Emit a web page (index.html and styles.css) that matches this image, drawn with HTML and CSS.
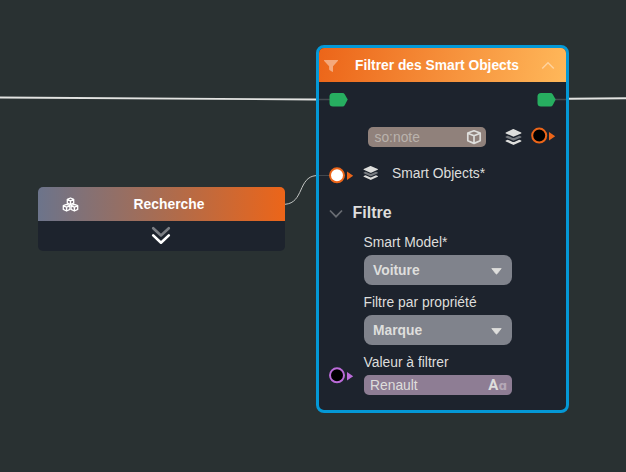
FILE: index.html
```html
<!DOCTYPE html>
<html lang="fr">
<head>
<meta charset="utf-8">
<title>Smart Objects</title>
<link rel="stylesheet" href="styles.css">
</head>
<body>
<svg class="defs" width="0" height="0" aria-hidden="true">
  <symbol id="layers" viewBox="0 0 16 16">
    <path d="M8 0 15.200 3.500a.5.5 0 0 1 0 .9L8.400 7.600a1 1 0 0 1-.8 0L.8 4.400a.5.5 0 0 1 0-.9L7.600.1z" fill="#dededc"/>
    <path d="M.8 7.500 2.600 6.700 7.300 8.900a1.700 1.700 0 0 0 1.400 0L13.400 6.700 15.200 7.500a.5.5 0 0 1 0 .9L8.400 11.600a1 1 0 0 1-.8 0L.8 8.400a.5.5 0 0 1 0-.9z" fill="#777b80"/>
    <path d="M.8 11.500 2.600 10.700 7.300 12.900a1.700 1.700 0 0 0 1.400 0L13.400 10.700 15.200 11.500a.5.5 0 0 1 0 .9L8.400 15.800a1 1 0 0 1-.8 0L.8 12.400a.5.5 0 0 1 0-.9z" fill="#dededc"/>
  </symbol>
  <symbol id="cube" viewBox="0 0 16 16">
    <path d="M8 1.800 14.200 4v7.800L8 14.400 1.800 11.800V4zM1.800 4.300 8 6.800l6.200-2.500M8 6.800v7.500" fill="none" stroke="currentColor" stroke-width="1.700" stroke-linejoin="round"/>
  </symbol>
</svg>

<main class="canvas">
  <section class="node search">
    <header class="bar search-bar">
      <svg class="cubes" viewBox="0 0 17 15" preserveAspectRatio="none" fill="none" stroke="#fff" stroke-width="1.300" stroke-linejoin="round">
        <path d="M8.500 1 11.700 2.400v3.700L8.500 7.700 5.300 6.100V2.400zM5.300 2.600l3.200 1.300 3.200-1.300M8.500 4v3.500"/>
        <path d="M4.600 7.300 7.900 8.700v3.700L4.600 14 1.300 12.400V8.700zM1.300 8.900l3.300 1.300 3.300-1.300M4.600 10.300v3.500"/>
        <path d="M12.400 7.300 15.700 8.700v3.700L12.400 14 9.100 12.400V8.700zM9.100 8.900l3.300 1.300 3.300-1.300M12.400 10.300v3.500"/>
      </svg>
      <h2 class="title">Recherche</h2>
    </header>
    <div class="expand">
      <svg width="20" height="20" viewBox="0 0 20 20" fill="none" stroke-width="2.600" stroke-linecap="round" stroke-linejoin="round">
        <path d="M2.200 2.200 10 9.500l7.800-7.300" stroke="#7b7e84"/>
        <path d="M2.200 9.400 10 16.700l7.800-7.300" stroke="#fff"/>
      </svg>
    </div>
  </section>

  <section class="node filter">
    <header class="bar filter-bar">
      <svg class="funnel" viewBox="0 0 14 12"><path d="M.6 0h12.800a.5.5 0 0 1 .4.900L9 6.200v5.200a.5.5 0 0 1-.8.400L5.400 9.900a.8.800 0 0 1-.3-.6V6.200L.2.900A.5.500 0 0 1 .6 0z" fill="#fff" fill-opacity=".42"/></svg>
      <h2 class="title">Filtrer des Smart Objects</h2>
      <svg class="collapse" viewBox="0 0 14 9"><path d="M1.200 7.500 7 1.700l5.800 5.800" fill="none" stroke="#fff" stroke-opacity=".42" stroke-width="1.500"/></svg>
    </header>
    <div class="body">
      <div class="output">
        <div class="field note"><span>so:note</span><svg class="cube"><use href="#cube"/></svg></div>
        <svg class="layers" viewBox="0 0 16 16" preserveAspectRatio="none"><use href="#layers"/></svg>
      </div>
      <div class="input">
        <svg class="layers" viewBox="0 0 16 16" preserveAspectRatio="none"><use href="#layers"/></svg>
        <span>Smart Objects*</span>
      </div>
      <h3 class="group">
        <svg width="14" height="10" viewBox="0 0 14 10"><path d="M1 1.500 7 7.700l6-6.200" fill="none" stroke="#686c72" stroke-width="1.700"/></svg>
        <span>Filtre</span>
      </h3>
      <div class="form">
        <div class="label">Smart Model*</div>
        <div class="select"><span>Voiture</span><svg class="caret" viewBox="0 0 11 7"><path d="M.8.500h9.400L6.100 5.700a.8.800 0 0 1-1.200 0z" fill="#dededc" stroke="#dededc" stroke-width=".8" stroke-linejoin="round"/></svg></div>
        <div class="label">Filtre par propriété</div>
        <div class="select"><span>Marque</span><svg class="caret" viewBox="0 0 11 7"><path d="M.8.500h9.400L6.100 5.700a.8.800 0 0 1-1.200 0z" fill="#dededc" stroke="#dededc" stroke-width=".8" stroke-linejoin="round"/></svg></div>
        <div class="label">Valeur à filtrer</div>
        <div class="field value"><span>Renault</span><span class="type">A<i>ɑ</i></span></div>
      </div>
    </div>
  </section>

  <svg class="wires" width="626" height="472" viewBox="0 0 626 472" fill="none">
    <path d="M0 97.500 316 99.500M569 98.800 626 98.200" stroke="#e2e3e1" stroke-width="1.900"/>
    <path d="M319 99.500h11M555 99.500h11" stroke="#444a50" stroke-width="1.500"/>
    <path d="M285 204.300C304 203 298 177 316 175.600" stroke="#c4c7c5"/>
    <path d="M319 175.500h11" stroke="#42484e"/>
    <path id="flow" d="M333 93h9.500q1.500 0 2.200 1.200l3 5.300-3 5.800q-.7 1.200-2.200 1.200H333q-3.500 0-3.500-3.500V96.500q0-3.500 3.500-3.500z" fill="#27ae60"/>
    <use href="#flow" x="208"/>
    <g stroke-width="2">
      <circle cx="337" cy="175.300" r="7" fill="#fff" stroke="#ec6519"/>
      <circle cx="539.200" cy="135.600" r="7" fill="#000" stroke="#ec6519"/>
      <circle cx="337" cy="375.300" r="7" fill="#000" stroke="#bb6bd9"/>
    </g>
    <path d="m347 171.500 6.200 4.200-6.200 4.200zM549 132l6.200 4.200-6.200 4.200z" fill="#ec6519"/>
    <path d="m347 372 6.200 4.200-6.200 4.200z" fill="#bb6bd9"/>
  </svg>
</main>
</body>
</html>
```
FILE: styles.css
```css
* { box-sizing: border-box; }

body {
  margin: 0;
  background: #293132;
  color: #dededc;
  font: 13.850px/20px "Liberation Sans", Arial, sans-serif;
}

h2, h3 { margin: 0; }
svg { display: block; flex: none; }
.defs { position: absolute; }

.canvas {
  position: relative;
  width: 626px;
  height: 472px;
  overflow: hidden;
}

.wires {
  position: absolute;
  inset: 0;
  pointer-events: none;
}

.node {
  position: absolute;
  overflow: hidden;
  background: #1d232d;
}

.search {
  left: 38px;
  top: 187px;
  width: 247px;
  height: 64px;
  border-radius: 5px;
}

.filter {
  left: 316px;
  top: 45px;
  width: 253px;
  height: 368px;
  border: 3px solid #0498d6;
  border-radius: 8px;
}

.bar {
  display: grid;
  align-items: center;
  height: 34px;
  color: #fff;
}

.title {
  font-size: 13.850px;
  line-height: 20px;
  text-align: center;
  white-space: nowrap;
}

.search-bar {
  grid-template-columns: 64px 1fr 49px;
  background: linear-gradient(90deg, #6c748b, #b26b49 57%, #ec6519);
}

.cubes { width: 17px; height: 15px; margin: 1px 0 0 24px; }

.expand { display: flex; justify-content: center; padding: 5px 1px 0 0; }

.filter-bar {
  grid-template-columns: 28px 1fr 34px;
  background: linear-gradient(100deg, #ec6519, #ffb85a);
}

.funnel { width: 14px; height: 12px; margin: 1px 0 0 5px; }
.filter-bar .title { padding: 2px 5px 0 0; font-size: 13.800px; }
.collapse { width: 14px; height: 9px; margin-left: 9px; }

.body { padding-top: 45px; }

.output {
  display: flex;
  align-items: center;
  gap: 19px;
  padding-left: 49px;
}
.output .layers { margin-top: -1px; }

.field {
  display: flex;
  align-items: center;
  justify-content: space-between;
  height: 20px;
  padding: 0 6.500px;
  border-radius: 5px;
}

.note { width: 118px; padding-right: 4px; background: #90817b; color: #bab3ad; }
.note span { margin-top: -1px; }
.cube { width: 16px; height: 16px; color: #dededc; }
.layers { width: 17px; height: 16px; }

.input {
  display: flex;
  align-items: center;
  gap: 14px;
  margin-top: 16px;
  padding-left: 43.500px;
}
.input .layers { width: 15.500px; height: 14px; margin-top: -1px; }

.group {
  display: flex;
  align-items: center;
  gap: 9.500px;
  height: 24px;
  margin-top: 18px;
  padding-left: 10px;
  font-size: 16px;
}
.group svg { margin-top: 1px; }

.form { width: 148px; margin: 6px 0 0 44.500px; }
.label { height: 24px; line-height: 22px; white-space: nowrap; }

.select {
  display: flex;
  align-items: center;
  justify-content: space-between;
  height: 30px;
  margin-bottom: 6px;
  padding: 0 9.500px;
  border-radius: 8px;
  background: #80838c;
  font-weight: bold;
}
.caret { width: 11px; height: 7px; margin-top: 2px; }

.value { padding-right: 4.500px; background: #8e7d94; }
.type { font: 700 15px/20px Roboto, sans-serif; }
.type i { color: #b5a8b7; font: bold 12px/20px "DejaVu Sans", sans-serif; }
```
